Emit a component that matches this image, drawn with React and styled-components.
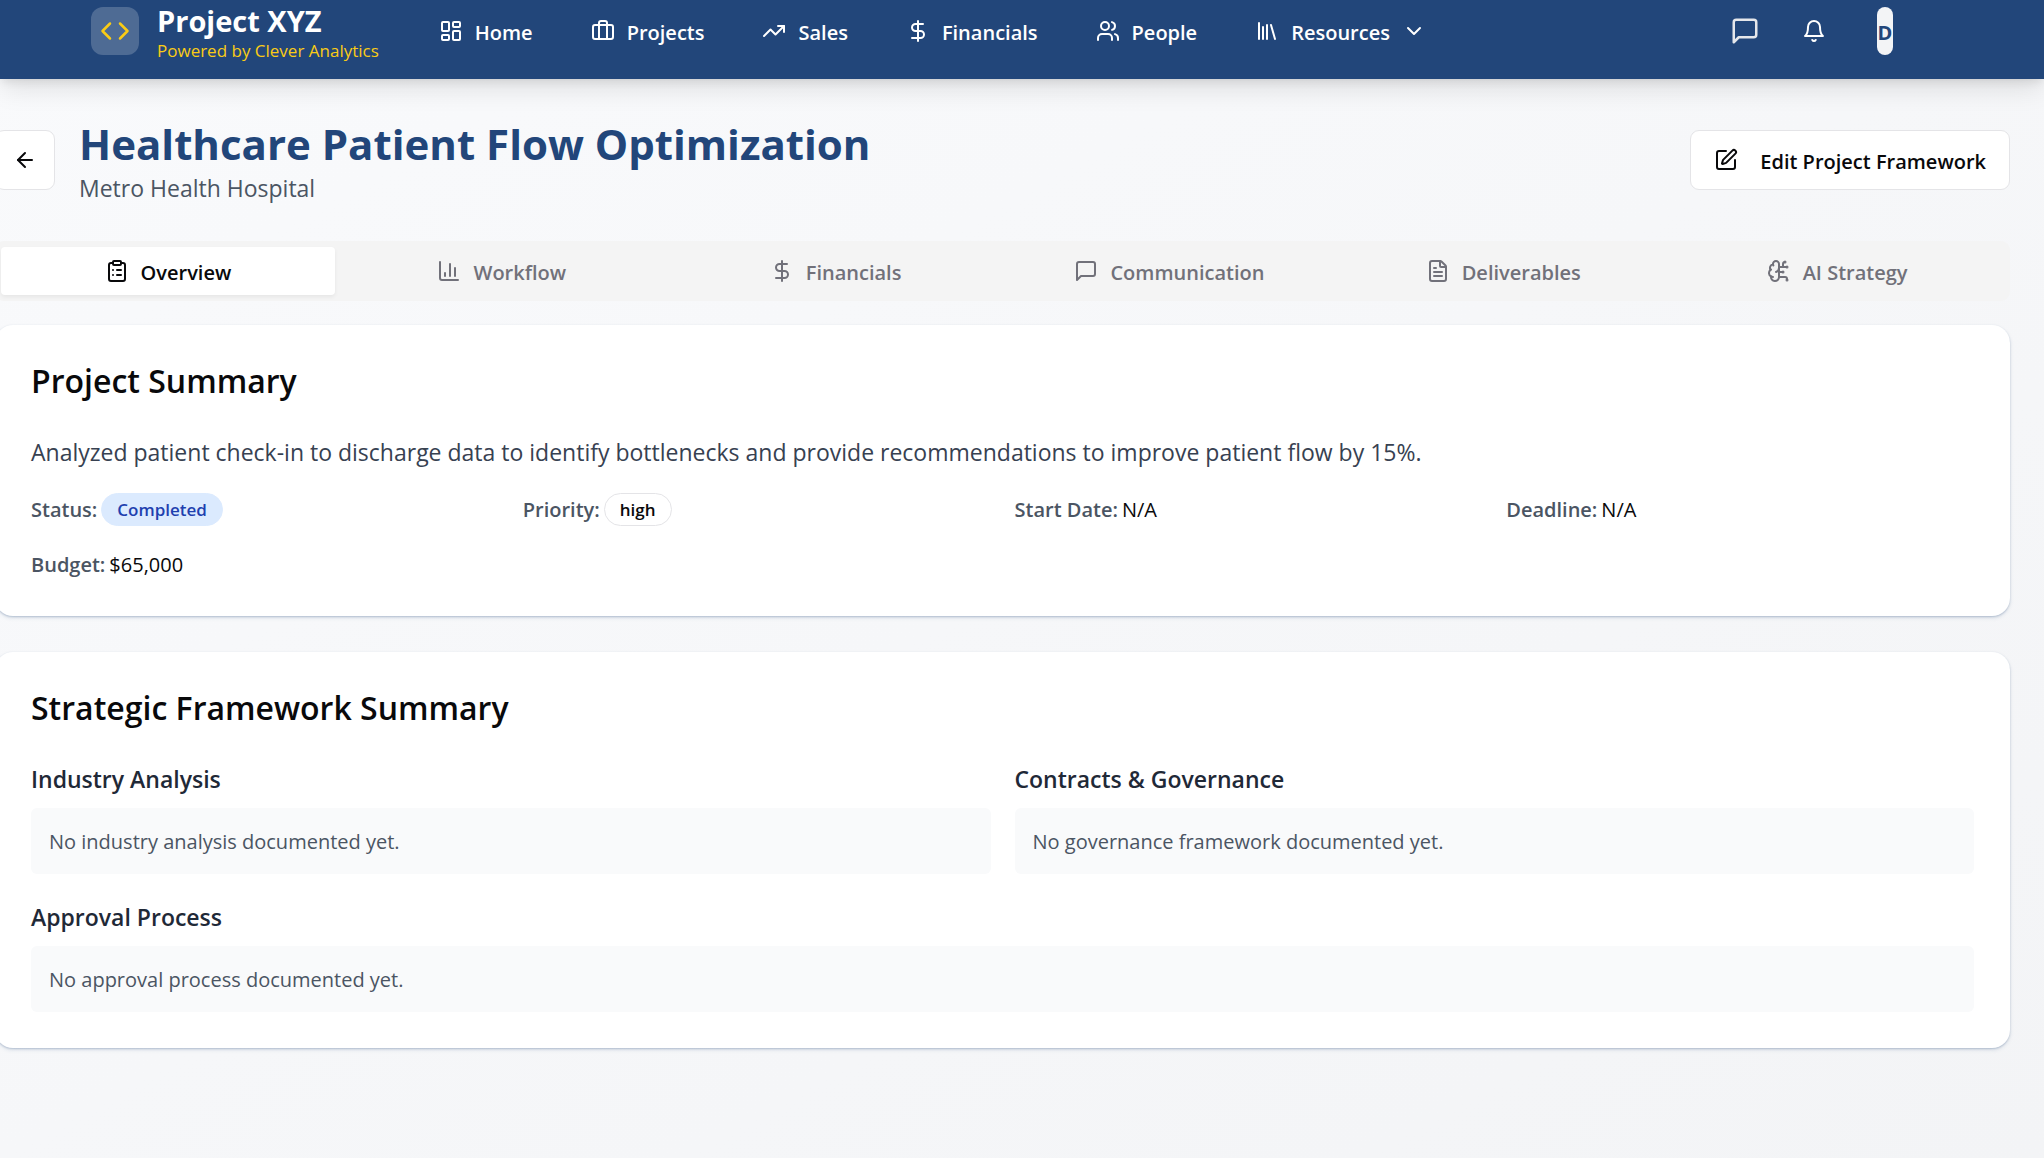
import React, { useState } from "react";
import styled, { createGlobalStyle, ThemeProvider } from "styled-components";
import {
  ArrowLeft,
  BrainCircuit,
  Briefcase,
  ChartColumn,
  ChevronDown,
  ClipboardList,
  Code,
  DollarSign,
  FileText,
  LayoutDashboard,
  Library,
  SquarePen,
  TrendingUp,
  Users,
} from "lucide-react";

const theme = {
  colors: {
    brand: "#22467a",
    accent: "#facc15",
    text: "#09090b",
    heading: "#1f2937",
    body: "#374151",
    label: "#4b5563",
    muted: "#71717a",
    border: "#e4e4e7",
    panel: "#f9fafb",
    tabs: "#f4f4f4",
  },
  sizes: {
    small: "17px",
    base: "20px",
    large: "23px",
    title: "32px",
    page: "42px",
  },
  weights: {
    semibold: 600,
    bold: 700,
  },
};

const GlobalStyle = createGlobalStyle`
  *,
  *::before,
  *::after {
    box-sizing: border-box;
  }

  body {
    margin: 0;
    overflow-x: hidden;
    font-family: "Open Sans", "Noto Sans", sans-serif;
    font-size: 20px;
    line-height: 30px;
    color: #09090b;
  }

  h1, h2, h3, p, dl, dt, dd {
    margin: 0;
  }

  button {
    font: inherit;
    color: inherit;
    border: 0;
    padding: 0;
    background: none;
    cursor: pointer;
  }

  svg {
    display: block;
    flex-shrink: 0;
  }
`;

const Page = styled.div`
  min-height: 100vh;
  background: linear-gradient(to bottom right, #f9fafc, #f3f4f6);
`;

const TopBar = styled.header`
  position: relative;
  display: flex;
  align-items: center;
  justify-content: space-between;
  padding: 7px 151px 24px 91px;
  background: ${({ theme }) => theme.colors.brand};
  color: #fff;
  box-shadow: 0 12px 24px -2px rgba(0, 0, 0, 0.1),
    0 4px 9px -2px rgba(0, 0, 0, 0.1);
`;

const TopBarGroup = styled.div`
  display: flex;
  align-items: center;
  height: 48px;
  gap: ${({ $gap }) => $gap};
`;

const Brand = styled.a`
  display: flex;
  align-items: center;
  gap: 18px;
  color: inherit;
  text-decoration: none;
`;

const BrandMark = styled.span`
  display: grid;
  place-items: center;
  width: 48px;
  height: 48px;
  border-radius: 12px;
  background: rgba(255, 255, 255, 0.2);
  color: ${({ theme }) => theme.colors.accent};
`;

const BrandText = styled.span`
  display: flex;
  flex-direction: column;
  padding-top: 3px;
  white-space: nowrap;
`;

const BrandName = styled.span`
  font-size: 29px;
  font-weight: ${({ theme }) => theme.weights.bold};
  line-height: 36px;
`;

const BrandTagline = styled.span`
  font-size: ${({ theme }) => theme.sizes.small};
  line-height: 24px;
  color: ${({ theme }) => theme.colors.accent};
`;

const Nav = styled.nav`
  display: flex;
  align-items: center;
  gap: 58px;
`;

const NavLink = styled.a`
  display: flex;
  align-items: center;
  gap: 12px;
  font-size: ${({ theme }) => theme.sizes.base};
  font-weight: ${({ theme }) => theme.weights.semibold};
  color: inherit;
  text-decoration: none;
  white-space: nowrap;
`;

const Label = styled.span`
  padding-top: 3px;
`;

const IconButton = styled.button`
  display: grid;
  place-items: center;
  width: 60px;
  height: 48px;
  color: ${({ $dim }) => ($dim ? "#e5e7eb" : "#fff")};
`;

const Avatar = styled.button`
  display: flex;
  align-items: center;
  justify-content: center;
  width: 16px;
  height: 48px;
  margin-left: 24px;
  overflow: hidden;
  border-radius: 24px;
  background: #f3f4f6;
  color: ${({ theme }) => theme.colors.brand};
  font-weight: ${({ theme }) => theme.weights.bold};
`;

/* The content bleeds slightly past the left edge of the window */
const Main = styled.main`
  margin: 0 34px 0 -5px;
  padding: 36px 0;
`;

const PageHeader = styled.div`
  display: flex;
  align-items: center;
  justify-content: space-between;
  margin-bottom: 36px;
`;

const PageHeading = styled.div`
  display: flex;
  align-items: center;
  gap: 24px;
`;

const PageTitle = styled.h1`
  font-size: ${({ theme }) => theme.sizes.page};
  font-weight: ${({ theme }) => theme.weights.bold};
  line-height: 57px;
  color: ${({ theme }) => theme.colors.brand};
`;

const Client = styled.p`
  font-size: ${({ theme }) => theme.sizes.large};
  line-height: 33px;
  color: ${({ theme }) => theme.colors.label};
`;

const OutlineButton = styled.button`
  display: flex;
  align-items: center;
  justify-content: center;
  gap: 22px;
  min-width: 60px;
  height: 60px;
  padding: ${({ $square }) => ($square ? "0" : "0 23px")};
  border: 1px solid ${({ theme }) => theme.colors.border};
  border-radius: 9px;
  background: #fff;
  font-weight: ${({ theme }) => theme.weights.semibold};
`;

const TabList = styled.div`
  display: grid;
  grid-template-columns: repeat(6, 1fr);
  height: 60px;
  margin-bottom: 24px;
  padding: 6px;
  border-radius: 9px;
  background: ${({ theme }) => theme.colors.tabs};
`;

const Tab = styled.button`
  display: flex;
  align-items: center;
  justify-content: center;
  gap: 12px;
  border-radius: 4px;
  font-weight: ${({ theme }) => theme.weights.semibold};
  color: ${({ theme, $active }) =>
    $active ? theme.colors.text : theme.colors.muted};
  background: ${({ $active }) => ($active ? "#fff" : "transparent")};
  box-shadow: ${({ $active }) =>
    $active ? "0 2px 4px rgba(0, 0, 0, 0.06)" : "none"};
`;

const Card = styled.section`
  padding: 36px;
  border-radius: 18px;
  background: #fff;
  box-shadow: 0 2px 4px rgba(34, 70, 122, 0.12),
    0 1px 2px rgba(34, 70, 122, 0.24);

  & + & {
    margin-top: 36px;
  }
`;

const CardTitle = styled.h2`
  margin-bottom: 32px;
  font-size: ${({ theme }) => theme.sizes.title};
  font-weight: ${({ theme }) => theme.weights.semibold};
  line-height: 40px;
`;

const Description = styled.p`
  margin-bottom: 22px;
  font-size: ${({ theme }) => theme.sizes.large};
  line-height: 38px;
  color: ${({ theme }) => theme.colors.body};
`;

const Facts = styled.dl`
  display: grid;
  grid-template-columns: repeat(4, 1fr);
  gap: 24px;
`;

const Fact = styled.div`
  display: flex;
  align-items: center;
  gap: 4px;

  dt {
    font-weight: ${({ theme }) => theme.weights.semibold};
    color: ${({ theme }) => theme.colors.label};
  }
`;

const Badge = styled.span`
  display: block;
  padding: 3px 15px;
  border: 1px solid
    ${({ theme, $filled }) => ($filled ? "#dbeafe" : theme.colors.border)};
  border-radius: 17px;
  background: ${({ $filled }) => ($filled ? "#dbeafe" : "#fff")};
  color: ${({ theme, $filled }) => ($filled ? "#1e40af" : theme.colors.text)};
  font-size: ${({ theme }) => theme.sizes.small};
  font-weight: ${({ theme }) => theme.weights.semibold};
  line-height: 25px;
`;

const FrameworkGrid = styled.div`
  display: grid;
  grid-template-columns: 1fr 1fr;
  gap: 24px;
`;

const FrameworkItem = styled.div`
  grid-column: ${({ $wide }) => ($wide ? "1 / -1" : "auto")};
`;

const FrameworkTitle = styled.h3`
  margin-bottom: 10px;
  font-size: ${({ theme }) => theme.sizes.large};
  font-weight: ${({ theme }) => theme.weights.semibold};
  line-height: 38px;
  color: ${({ theme }) => theme.colors.heading};
`;

const FrameworkNote = styled.p`
  padding: 19px 18px 17px;
  border-radius: 6px;
  background: ${({ theme }) => theme.colors.panel};
  color: ${({ theme }) => theme.colors.label};
`;

function MessageIcon({ size = 24 }) {
  return (
    <svg
      width={size}
      height={size}
      viewBox="0 0 24 24"
      fill="none"
      stroke="currentColor"
      strokeWidth="2"
      strokeLinecap="round"
      strokeLinejoin="round"
      aria-hidden="true"
    >
      <path d="M21 15a2 2 0 0 1-2 2H7l-4 4V5a2 2 0 0 1 2-2h14a2 2 0 0 1 2 2z" />
    </svg>
  );
}

function BellIcon({ size = 24 }) {
  return (
    <svg
      width={size}
      height={size}
      viewBox="0 0 24 24"
      fill="none"
      stroke="currentColor"
      strokeWidth="2"
      strokeLinecap="round"
      strokeLinejoin="round"
      aria-hidden="true"
    >
      <path d="M6 8a6 6 0 0 1 12 0c0 7 3 9 3 9H3s3-2 3-9" />
      <path d="M10.3 21a1.94 1.94 0 0 0 3.4 0" />
    </svg>
  );
}

const navItems = [
  { label: "Home", icon: LayoutDashboard },
  { label: "Projects", icon: Briefcase },
  { label: "Sales", icon: TrendingUp },
  { label: "Financials", icon: DollarSign },
  { label: "People", icon: Users },
];

const tabs = [
  { label: "Overview", icon: ClipboardList },
  { label: "Workflow", icon: ChartColumn },
  { label: "Financials", icon: DollarSign },
  { label: "Communication", icon: MessageIcon },
  { label: "Deliverables", icon: FileText },
  { label: "AI Strategy", icon: BrainCircuit },
];

const facts = [
  { label: "Status:", value: <Badge $filled>Completed</Badge> },
  { label: "Priority:", value: <Badge>high</Badge> },
  { label: "Start Date:", value: "N/A" },
  { label: "Deadline:", value: "N/A" },
  { label: "Budget:", value: "$65,000" },
];

const framework = [
  {
    title: "Industry Analysis",
    note: "No industry analysis documented yet.",
  },
  {
    title: "Contracts & Governance",
    note: "No governance framework documented yet.",
  },
  {
    title: "Approval Process",
    note: "No approval process documented yet.",
    wide: true,
  },
];

function Header() {
  return (
    <TopBar>
      <TopBarGroup $gap="60px">
        <Brand href="#">
          <BrandMark>
            <Code size={30} />
          </BrandMark>
          <BrandText>
            <BrandName>Project XYZ</BrandName>
            <BrandTagline>Powered by Clever Analytics</BrandTagline>
          </BrandText>
        </Brand>

        <Nav>
          {navItems.map(({ label, icon: Icon }) => (
            <NavLink key={label} href="#">
              <Icon size={24} />
              <Label>{label}</Label>
            </NavLink>
          ))}
          <NavLink as="button" type="button">
            <Library size={24} />
            <Label>Resources</Label>
            <ChevronDown size={24} />
          </NavLink>
        </Nav>
      </TopBarGroup>

      <TopBarGroup $gap="9px">
        <IconButton type="button" aria-label="Messages" $dim>
          <MessageIcon size={30} />
        </IconButton>
        <IconButton type="button" aria-label="Notifications">
          <BellIcon />
        </IconButton>
        <Avatar type="button">
          <Label>D</Label>
        </Avatar>
      </TopBarGroup>
    </TopBar>
  );
}

function App() {
  const [activeTab, setActiveTab] = useState("Overview");

  return (
    <ThemeProvider theme={theme}>
      <GlobalStyle />
      <Page>
        <Header />

        <Main>
          <PageHeader>
            <PageHeading>
              <OutlineButton type="button" aria-label="Back" $square>
                <ArrowLeft size={24} />
              </OutlineButton>
              <div>
                <PageTitle>Healthcare Patient Flow Optimization</PageTitle>
                <Client>Metro Health Hospital</Client>
              </div>
            </PageHeading>
            <OutlineButton type="button">
              <SquarePen size={24} />
              <Label>Edit Project Framework</Label>
            </OutlineButton>
          </PageHeader>

          <TabList role="tablist">
            {tabs.map(({ label, icon: Icon }) => (
              <Tab
                key={label}
                type="button"
                role="tab"
                aria-selected={label === activeTab}
                $active={label === activeTab}
                onClick={() => setActiveTab(label)}
              >
                <Icon size={24} />
                <Label>{label}</Label>
              </Tab>
            ))}
          </TabList>

          <Card>
            <CardTitle>Project Summary</CardTitle>
            <Description>
              Analyzed patient check-in to discharge data to identify
              bottlenecks and provide recommendations to improve patient flow by
              15%.
            </Description>
            <Facts>
              {facts.map(({ label, value }) => (
                <Fact key={label}>
                  <dt>{label}</dt>
                  <dd>{value}</dd>
                </Fact>
              ))}
            </Facts>
          </Card>

          <Card>
            <CardTitle>Strategic Framework Summary</CardTitle>
            <FrameworkGrid>
              {framework.map(({ title, note, wide }) => (
                <FrameworkItem key={title} $wide={wide}>
                  <FrameworkTitle>{title}</FrameworkTitle>
                  <FrameworkNote>{note}</FrameworkNote>
                </FrameworkItem>
              ))}
            </FrameworkGrid>
          </Card>
        </Main>
      </Page>
    </ThemeProvider>
  );
}

export default App;
